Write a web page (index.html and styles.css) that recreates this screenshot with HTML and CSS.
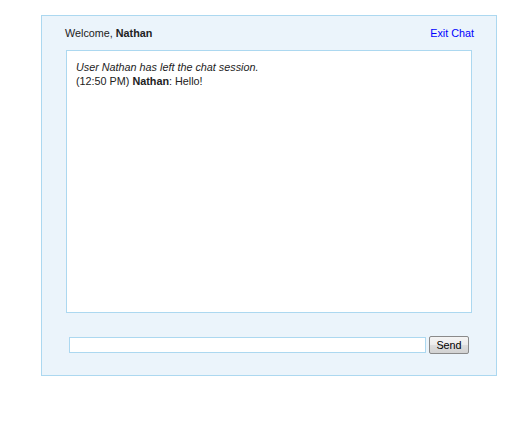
FILE: index.html
```html
<!DOCTYPE html>
<html>
<head>
<meta charset="utf-8">
<title>Chat</title>
<link rel="stylesheet" href="styles.css">
</head>
<body>
<div class="wrapper">
  <div class="menu">
    <span class="welcome">Welcome, <b>Nathan</b></span>
    <a class="logout" href="#">Exit Chat</a>
  </div>
  <div class="chatbox">
    <div class="msgln left"><i>User Nathan has left the chat session.</i></div>
    <div class="msgln">(12:50 PM) <b>Nathan</b>: Hello!</div>
  </div>
  <form class="msgform" action="#">
    <input class="usermsg" type="text" name="usermsg">
    <button class="submitmsg" type="button">Send</button>
  </form>
</div>
</body>
</html>
```
FILE: styles.css
```css
html, body {
  margin: 0;
  padding: 0;
  background: #fff;
}
body {
  font-family: "Liberation Sans", Arial, sans-serif;
  font-size: 10.8px;
  color: #222;
}
.wrapper {
  margin: 15px 0 0 41px;
  width: 454px;
  background: #EBF4FB;
  border: 1px solid #ACD8F0;
}
.menu {
  display: flex;
  justify-content: space-between;
  align-items: center;
  padding: 10px 22px 10px 23px;
  line-height: 14px;
}
.welcome b { color: #222; }
.logout {
  color: #0000ff;
  text-decoration: none;
}
.chatbox {
  margin: 0 24px 0 24px;
  padding: 10px 9px;
  height: 241px;
  background: #fff;
  border: 1px solid #ACD8F0;
  line-height: 13.5px;
  overflow: auto;
}
.msgform {
  display: flex;
  align-items: center;
  gap: 3px;
  margin: 0;
  padding: 23px 0 21px 27px;
}
.usermsg {
  box-sizing: border-box;
  width: 357px;
  height: 16px;
  margin: 0;
  padding: 0 2px;
  border: 1px solid #ACD8F0;
  background: #fff;
  font: 10.8px "Liberation Sans", Arial, sans-serif;
  outline: none;
}
.submitmsg {
  box-sizing: border-box;
  width: 40px;
  height: 18px;
  margin: 0;
  padding: 0;
  border: 1px solid #8a8a8a;
  border-radius: 2px;
  background: linear-gradient(#f4f4f4, #ececec 50%, #dedede 50%, #d2d2d2);
  font: 10.8px "Liberation Sans", Arial, sans-serif;
  color: #000;
}
```
